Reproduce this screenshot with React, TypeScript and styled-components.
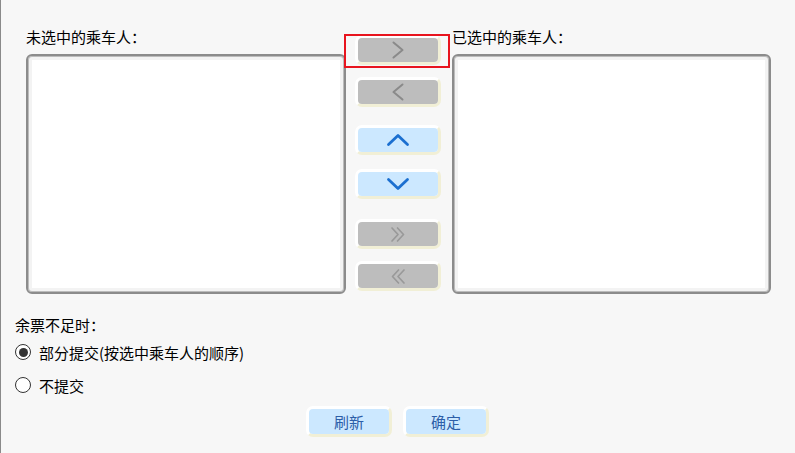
import React from "react";
import styled, { createGlobalStyle } from "styled-components";

const Global = createGlobalStyle`
  html, body { margin: 0; padding: 0; background: #f7f7f7; }
  * { box-sizing: border-box; }
`;

const Window = styled.div`
  width: 795px;
  height: 453px;
  background: #f7f7f7;
  border-left: 1px solid #8a8a8a;
  font-family: "Noto Sans CJK SC", "Noto Sans", sans-serif;
  font-size: 15px;
  color: #000;
  display: flex;
  flex-direction: column;
  overflow: hidden;
`;

const TopRow = styled.div`
  display: flex;
  padding: 27px 0 0 25px;
`;

const Column = styled.div<{ $w: number }>`
  width: ${(p) => p.$w}px;
  display: flex;
  flex-direction: column;
`;

const Label = styled.div`
  height: 20px;
  line-height: 20px;
  margin-bottom: 7px;
  white-space: nowrap;
`;

const ListBox = styled.div`
  height: 240px;
  border: 2px solid #8c8c8c;
  border-radius: 6px;
  background: #fff;
  box-shadow: inset 0 0 0 1px #bcbcbc, inset 0 0 0 4px #f3f3f3;
`;

const MidCol = styled.div`
  width: 106px;
  padding: 8px 0 0 9px;
  display: flex;
  flex-direction: column;
`;

const BtnFrame = styled.div<{ $mt?: number; $h?: number }>`
  position: relative;
  width: 86px;
  height: ${(p) => p.$h ?? 30}px;
  margin-top: ${(p) => p.$mt ?? 0}px;
  border-style: solid;
  border-width: 3px;
  border-color: #ffffff #f1efd6 #f1efd6 #ffffff;
  border-radius: 7px;
  background: #fff;
`;

const BtnFace = styled.button<{ $blue?: boolean }>`
  width: 100%;
  height: 100%;
  border: none;
  padding: 0;
  margin: 0;
  border-radius: 4px;
  background: ${(p) => (p.$blue ? "#cce8ff" : "#bdbdbd")};
  display: flex;
  align-items: center;
  justify-content: center;
  font-family: inherit;
  font-size: 15px;
  color: #2d5ea8;
  cursor: default;
`;

const FocusRing = styled.div`
  position: absolute;
  left: -14px;
  top: -4px;
  width: 106px;
  height: 34px;
  border: 2px solid #e8141e;
  pointer-events: none;
`;

const Options = styled.div`
  padding-left: 14px;
  margin-top: 21px;
  display: flex;
  flex-direction: column;
`;

const OptLabel = styled.div`
  height: 20px;
  line-height: 20px;
`;

const RadioRow = styled.div<{ $mt: number }>`
  display: flex;
  align-items: center;
  height: 20px;
  margin-top: ${(p) => p.$mt}px;
  gap: 8px;
`;

const RadioDot = styled.span<{ $on?: boolean }>`
  width: 16px;
  height: 16px;
  border-radius: 50%;
  border: 1px solid #333;
  background: #fff;
  display: flex;
  align-items: center;
  justify-content: center;
  &::after {
    content: "";
    display: ${(p) => (p.$on ? "block" : "none")};
    width: 9px;
    height: 9px;
    border-radius: 50%;
    background: #333;
  }
`;

const BottomRow = styled.div`
  display: flex;
  justify-content: center;
  gap: 11px;
  margin-top: 11px;
  padding-right: 1px;
`;

const Chevron = ({ d, color, sw, w, h }: { d: string; color: string; sw: number; w: number; h: number }) => (
  <svg width={w} height={h} viewBox={`0 0 ${w} ${h}`} fill="none">
    <path d={d} stroke={color} strokeWidth={sw} strokeLinecap="round" strokeLinejoin="round" />
  </svg>
);

const GRAY = "#8a8a8a";
const BLUE = "#1b6fd0";

export default function App() {
  return (
    <>
      <Global />
      <Window>
        <TopRow>
          <Column $w={320}>
            <Label>未选中的乘车人：</Label>
            <ListBox />
          </Column>
          <MidCol>
            <BtnFrame>
              <FocusRing />
              <BtnFace>
                <Chevron w={14} h={18} d="M2.5 1.5 L11.5 9 L2.5 16.5" color={GRAY} sw={2} />
              </BtnFace>
            </BtnFrame>
            <BtnFrame $mt={12}>
              <BtnFace>
                <Chevron w={14} h={18} d="M11.5 1.5 L2.5 9 L11.5 16.5" color={GRAY} sw={2} />
              </BtnFace>
            </BtnFrame>
            <BtnFrame $mt={18}>
              <BtnFace $blue>
                <Chevron w={24} h={14} d="M2.5 11.5 L12 2.5 L21.5 11.5" color={BLUE} sw={2.8} />
              </BtnFace>
            </BtnFrame>
            <BtnFrame $mt={14}>
              <BtnFace $blue>
                <Chevron w={24} h={14} d="M2.5 2.5 L12 11.5 L21.5 2.5" color={BLUE} sw={2.8} />
              </BtnFace>
            </BtnFrame>
            <BtnFrame $mt={20}>
              <BtnFace>
                <Chevron w={16} h={17} d="M2 2 L8 8.5 L2 15 M7.5 2 L13.5 8.5 L7.5 15" color="#999999" sw={1.7} />
              </BtnFace>
            </BtnFrame>
            <BtnFrame $mt={12}>
              <BtnFace>
                <Chevron w={16} h={17} d="M14 2 L8 8.5 L14 15 M8.5 2 L2.5 8.5 L8.5 15" color="#999999" sw={1.7} />
              </BtnFace>
            </BtnFrame>
          </MidCol>
          <Column $w={319}>
            <Label>已选中的乘车人：</Label>
            <ListBox />
          </Column>
        </TopRow>
        <Options>
          <OptLabel>余票不足时：</OptLabel>
          <RadioRow $mt={7}>
            <RadioDot $on />
            <span>部分提交(按选中乘车人的顺序)</span>
          </RadioRow>
          <RadioRow $mt={13}>
            <RadioDot />
            <span>不提交</span>
          </RadioRow>
        </Options>
        <BottomRow>
          <BtnFrame $h={31}>
            <BtnFace $blue>刷新</BtnFace>
          </BtnFrame>
          <BtnFrame $h={31}>
            <BtnFace $blue>确定</BtnFace>
          </BtnFrame>
        </BottomRow>
      </Window>
    </>
  );
}
